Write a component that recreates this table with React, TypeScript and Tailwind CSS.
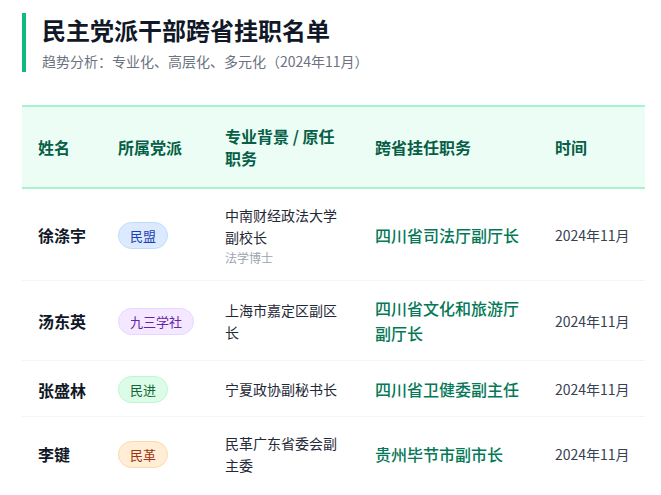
import React from "react";

type Row = {
  name: string;
  party: string;
  badge: string;
  origin: string;
  note?: string;
  post: string;
  time: string;
};

const rows: Row[] = [
  {
    name: "徐涤宇",
    party: "民盟",
    badge: "bg-[#dbeafe] text-[#1e40af] border-[#bfdbfe]",
    origin: "中南财经政法大学副校长",
    note: "法学博士",
    post: "四川省司法厅副厅长",
    time: "2024年11月",
  },
  {
    name: "汤东英",
    party: "九三学社",
    badge: "bg-[#f3e8ff] text-[#6b21a8] border-[#e9d5ff]",
    origin: "上海市嘉定区副区长",
    post: "四川省文化和旅游厅副厅长",
    time: "2024年11月",
  },
  {
    name: "张盛林",
    party: "民进",
    badge: "bg-[#dcfce7] text-[#166534] border-[#bbf7d0]",
    origin: "宁夏政协副秘书长",
    post: "四川省卫健委副主任",
    time: "2024年11月",
  },
  {
    name: "李键",
    party: "民革",
    badge: "bg-[#ffedd5] text-[#9a3412] border-[#fed7aa]",
    origin: "民革广东省委会副主委",
    post: "贵州毕节市副市长",
    time: "2024年11月",
  },
];

const cols = "grid grid-cols-[80px_107px_150px_180px_106px] items-center";
const cell = "px-4 pt-[15px] pb-[13px]";

export default function App() {
  return (
    <div className="min-h-screen bg-white pt-[13px] pl-[22px] font-['Noto_Sans_CJK_SC','Noto_Sans',sans-serif]">
      <div className="border-l-4 border-[#10b981] pl-4">
        <h1 className="text-[24px] leading-[34px] font-bold text-[#111827]">
          民主党派干部跨省挂职名单
        </h1>
        <p className="mt-1 text-[14px] leading-[21px] text-[#6b7280]">
          趋势分析：专业化、高层化、多元化（2024年11月）
        </p>
      </div>

      <div className="mt-[33px] w-[623px]">
        <div
          className={`${cols} border-y-2 border-[#a7f3d0] bg-[#ecfdf5] text-[16px] leading-[22px] font-bold text-[#065f46]`}
        >
          <div className="px-4 py-[18px]">姓名</div>
          <div className="px-4 py-[18px]">所属党派</div>
          <div className="px-4 py-[18px]">专业背景 / 原任职务</div>
          <div className="px-4 py-[18px]">跨省挂任职务</div>
          <div className="px-4 py-[18px]">时间</div>
        </div>

        {rows.map((r) => (
          <div key={r.name} className={`${cols} border-b border-[#f3f4f6] last:border-b-0`}>
            <div className={`${cell} text-[16px] leading-[24px] font-bold text-[#111827]`}>
              {r.name}
            </div>
            <div className={`${cell} flex`}>
              <span
                className={`whitespace-nowrap rounded-full border px-[11px] py-1 text-[13px] leading-[17px] ${r.badge}`}
              >
                {r.party}
              </span>
            </div>
            <div className={cell}>
              <div className="text-[14px] leading-[22.4px] text-[#1f2937]">{r.origin}</div>
              {r.note && (
                <div className="text-[12px] leading-[18px] text-[#9ca3af]">{r.note}</div>
              )}
            </div>
            <div className={`${cell} text-[16px] leading-[25.6px] font-medium text-[#047857]`}>
              {r.post}
            </div>
            <div className={`${cell} whitespace-nowrap text-[14px] leading-[21px] text-[#374151]`}>
              {r.time}
            </div>
          </div>
        ))}
      </div>
    </div>
  );
}
